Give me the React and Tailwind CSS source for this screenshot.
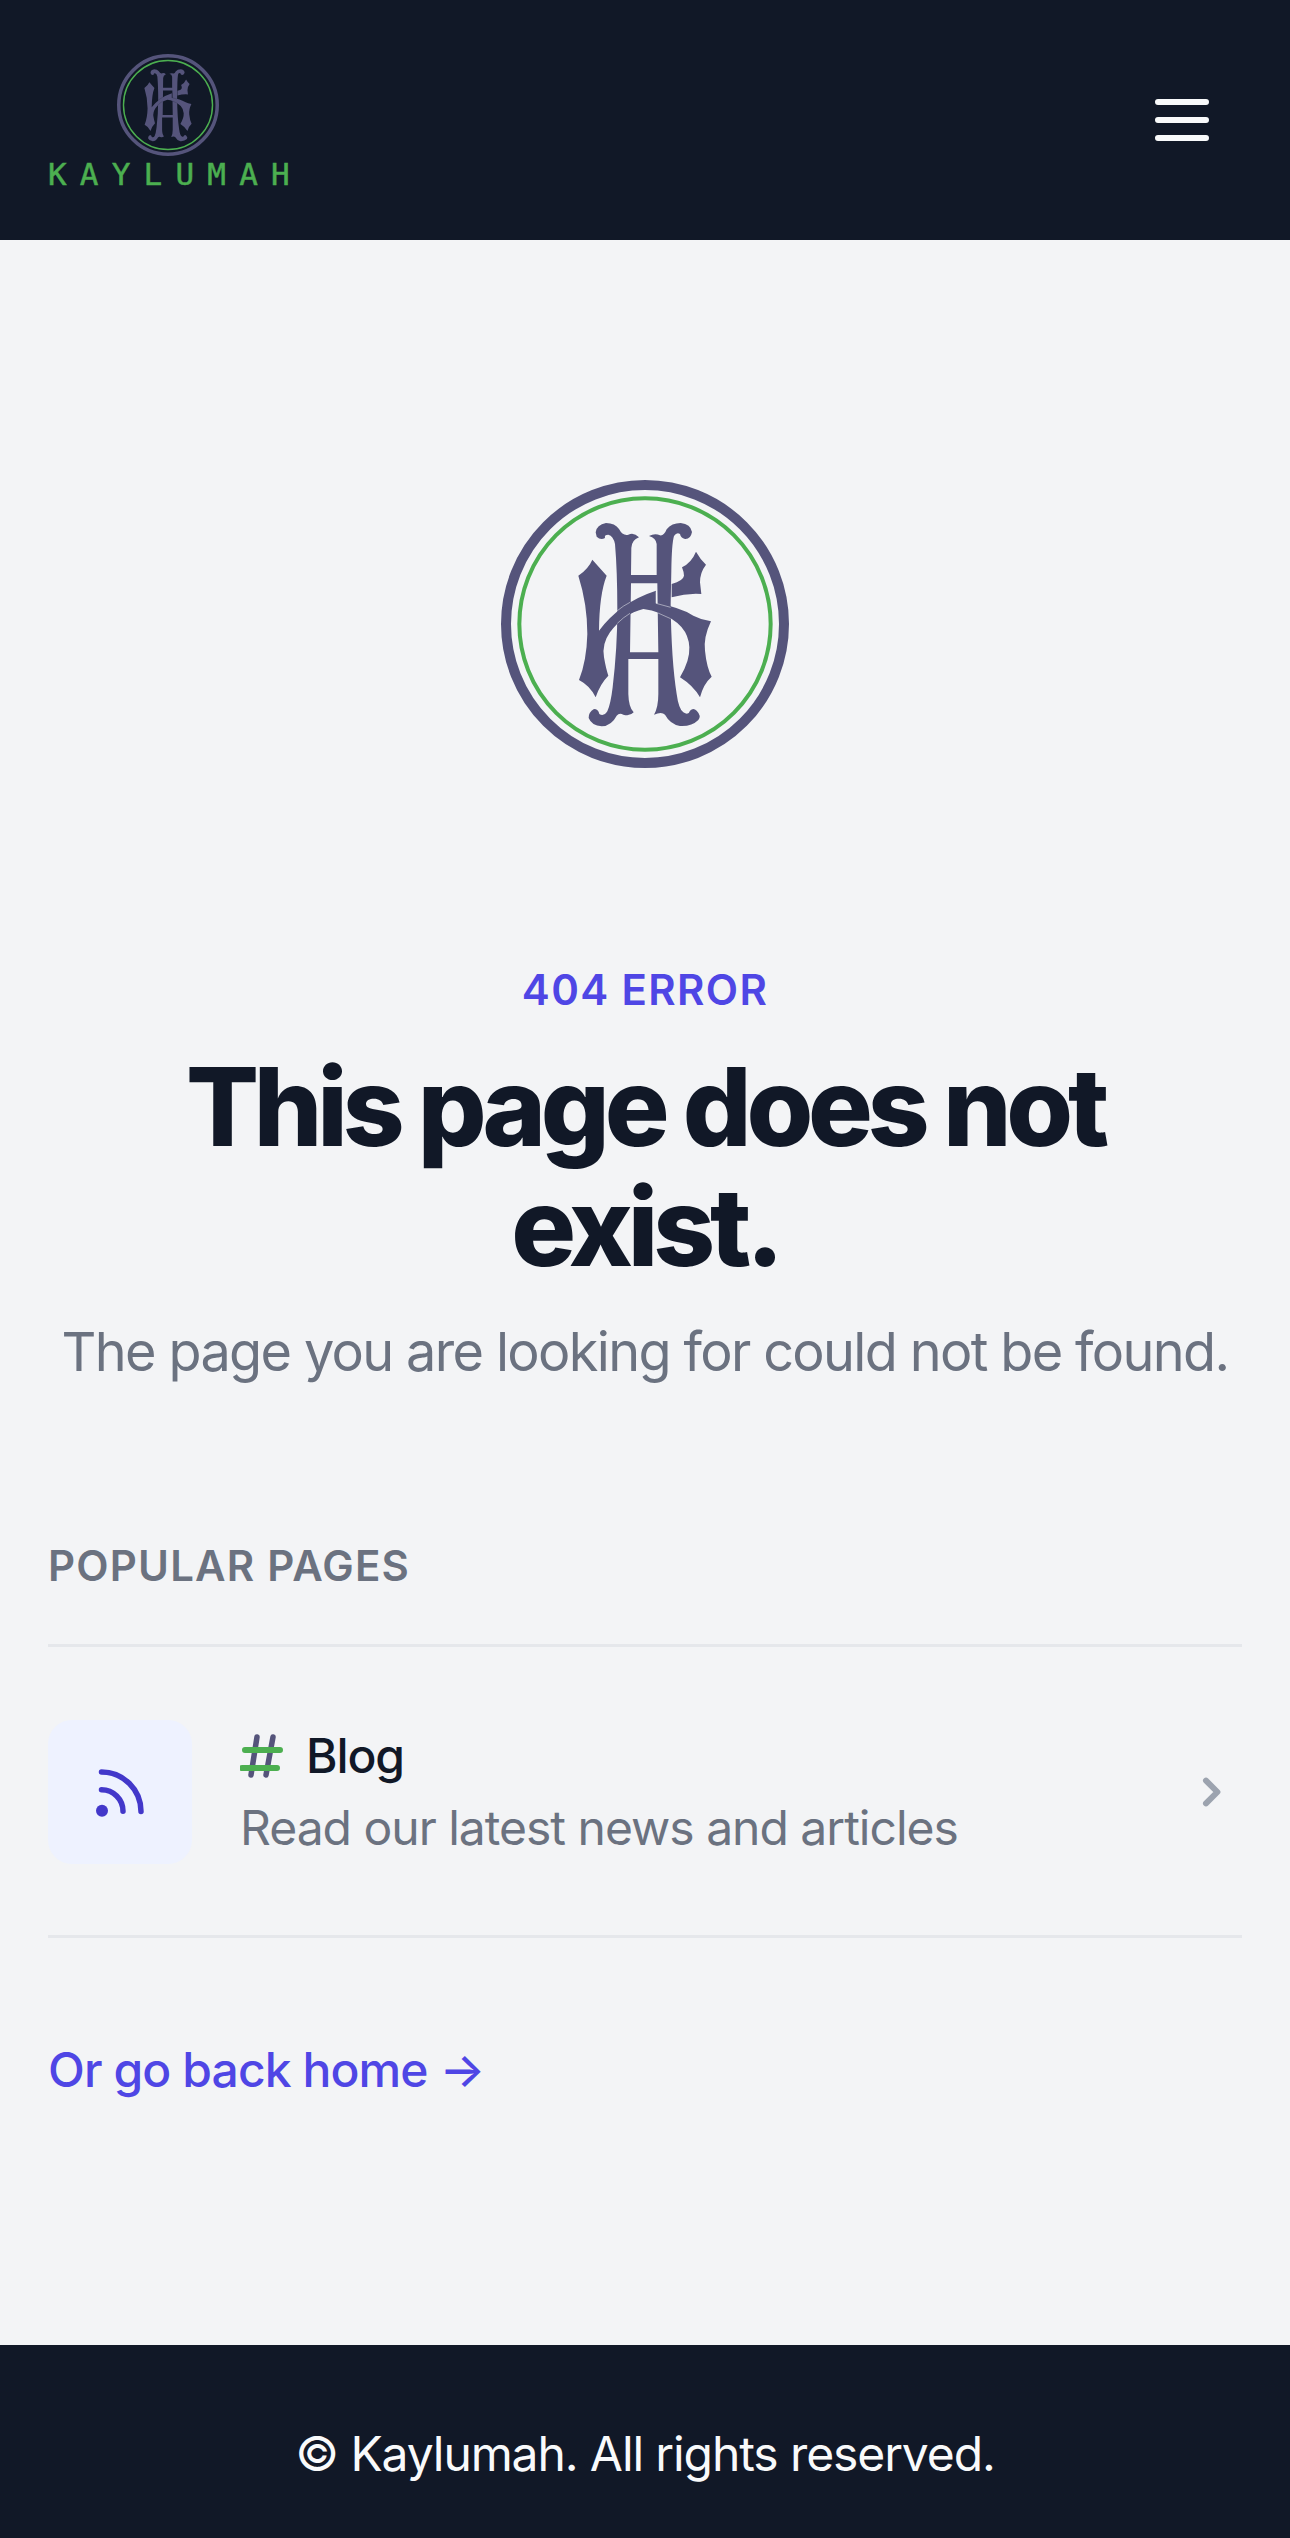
const fontFamily = 'font-[Inter,"Noto_Sans",sans-serif]';

// Monogram drawn in the coordinates of the big logo crop
const Monogram = ({ className, gap }) => (
  <svg viewBox="63 58 864 864" className={className}>
    <circle cx="495" cy="490" r="417" fill="none" stroke="#55547b" strokeWidth="30" />
    <circle cx="495" cy="490" r="377" fill="none" stroke="#4caf50" strokeWidth="12" />
    <g fill="#55547b">
      {/* H stems and crossbars */}
      <path d="M347 215 Q350 192 378 187 Q405 187 417 205 Q428 226 445 222 Q462 214 477 230 Q455 238 454 262 L453 343 L530 343 L530 250 Q528 232 507 226 Q525 216 540 224 Q552 226 560 206 Q575 187 602 187 Q632 190 636 214 Q632 236 615 235 Q602 232 600 220 Q590 214 582 226 Q575 250 574 330 L572 430 Q574 600 590 700 Q596 745 610 755 Q625 766 630 750 Q640 740 650 750 Q665 765 655 778 Q635 798 600 796 Q570 790 555 762 Q545 752 522 762 Q535 740 535 700 L535 595 L445 595 L445 700 Q446 740 461 755 Q450 768 430 762 Q418 755 410 765 Q395 795 365 797 Q335 795 326 772 Q325 755 342 745 Q355 745 358 760 Q372 768 382 752 Q392 730 398 680 Q412 560 412 450 Q412 330 405 250 Q400 226 385 222 Q372 222 375 232 Q362 240 350 228 Z M453 368 L450 575 L535 575 L532 368 Z" fillRule="evenodd" />
    </g>
    {/* K stem, arc and lower leg */}
    <path
      d="M337 297 L380 345 Q358 400 357 510 Q420 425 528 390 L528 428 Q600 440 640 465 Q665 478 693 482 Q670 530 675 570 Q680 620 695 648 Q670 670 660 710 Q640 675 600 650 Q630 600 628 560 Q625 490 540 458 Q515 448 490 445 Q430 460 390 515 Q365 550 372 590 Q378 625 385 645 Q360 670 347 710 Q330 675 297 658 Q320 600 322 520 Q322 430 295 345 Q325 325 337 297 Z"
      fill="#55547b"
    />
    <path d="M575 370 Q610 360 612 345 Q612 335 606 320 Q635 305 648 273 Q660 295 678 312 Q660 335 660 365 L664 400 Q620 397 575 410 Z" fill="#55547b" />
    {/* hairlines where the letters cross */}
    <path d="M412 450 Q430 435 450 425 M528 392 L528 428 L572 440 M412 488 Q430 470 450 458 M534 457 L572 474" fill="none" stroke={gap} strokeWidth="1.5" />
  </svg>
);

const HashIcon = () => (
  <svg viewBox="0 0 44 44" className="h-[44px] w-[44px]">
    <path d="M17 3 L11 41 M33 3 L26 41" stroke="#55547b" strokeWidth="5.5" strokeLinecap="round" />
    <path d="M5 16 H40 M2 34 H37" stroke="#4caf50" strokeWidth="6" strokeLinecap="round" />
  </svg>
);

const App = () => {
  return (
    <div className={`flex min-h-[2538px] flex-col bg-[#f3f4f6] ${fontFamily}`}>
      <header className="flex h-[240px] items-center justify-between bg-[#111827] pl-[48px] pr-[72px]">
        <div className="flex w-[240px] flex-col items-center pt-[6px]">
          <Monogram className="h-[102px] w-[102px]" gap="#111827" />
          <span className="self-start whitespace-nowrap font-['DejaVu_Sans_Mono',monospace] text-[31px] leading-[36px] tracking-[13.2px] text-[#4caf50] [-webkit-text-stroke:0.5px_#4caf50]">
            KAYLUMAH
          </span>
        </div>
        <svg viewBox="0 0 24 24" className="h-[72px] w-[72px]" fill="none" stroke="#f9fafb" strokeWidth="2" strokeLinecap="round">
          <path d="M4 6h16M4 12h16M4 18h16" />
        </svg>
      </header>

      <main className="flex flex-1 flex-col px-[48px] pt-[240px]">
        <div className="flex justify-center">
          <Monogram className="h-[288px] w-[288px]" gap="#f3f4f6" />
        </div>

        <div className="mt-[192px] text-center">
          <p className="text-[42px] font-semibold uppercase leading-[60px] tracking-[1.35px] text-[#4f46e5]">404 error</p>
          <h1 className="mt-[27px] text-[108px] font-extrabold leading-[120px] tracking-[-5.2px] text-[#111827]">
            This page does not exist.
          </h1>
          <p className="mt-[29px] whitespace-nowrap text-[54px] leading-[72px] tracking-[-1.65px] text-[#6b7280]">The page you are looking for could not be found.</p>
        </div>

        <div className="mt-[148px]">
          <h2 className="text-[42px] font-semibold uppercase leading-[60px] tracking-[1.2px] text-[#6b7280]">Popular pages</h2>
          <div className="mt-[48px] flex items-center gap-[48px] border-y-[3px] border-[#e5e7eb] pb-[71px] pt-[73px]">
            <div className="flex h-[144px] w-[144px] shrink-0 items-center justify-center rounded-[24px] bg-[#eef2ff]">
              <svg viewBox="0 0 72 72" className="h-[72px] w-[72px]" fill="none" stroke="#4338ca" strokeWidth="5.5" strokeLinecap="round">
                <path d="M17.5 16a39.5 39.5 0 0 1 39.5 39.5M17.5 33.7a21.5 21.5 0 0 1 21.5 21.5" />
                <circle cx="18" cy="54.7" r="6" fill="#4338ca" stroke="none" />
              </svg>
            </div>
            <div className="min-w-0 flex-1">
              <div className="flex items-center gap-[22px] text-[48px] font-medium leading-[72px] tracking-[-1.1px] text-[#111827]">
                <HashIcon />
                <span>Blog</span>
              </div>
              <p className="text-[48px] leading-[72px] tracking-[-1px] text-[#6b7280]">Read our latest news and articles</p>
            </div>
            <svg viewBox="0 0 20 20" className="mr-[3px] h-[60px] w-[60px]" fill="none" stroke="#9ca3af" strokeWidth="2" strokeLinecap="round" strokeLinejoin="round">
              <path d="M9 6.2 L12.8 10 L9 13.8" />
            </svg>
          </div>
          <a className="mt-[96px] block text-[48px] font-medium leading-[72px] tracking-[-0.9px] text-[#4f46e5]">Or go back home →</a>
        </div>
      </main>

      <footer className="h-[193px] bg-[#111827] pt-[73px] text-center">
        <p className="text-[48px] leading-[72px] tracking-[-1.1px] text-[#f9fafb]">© Kaylumah. All rights reserved.</p>
      </footer>
    </div>
  );
};

export default App;
